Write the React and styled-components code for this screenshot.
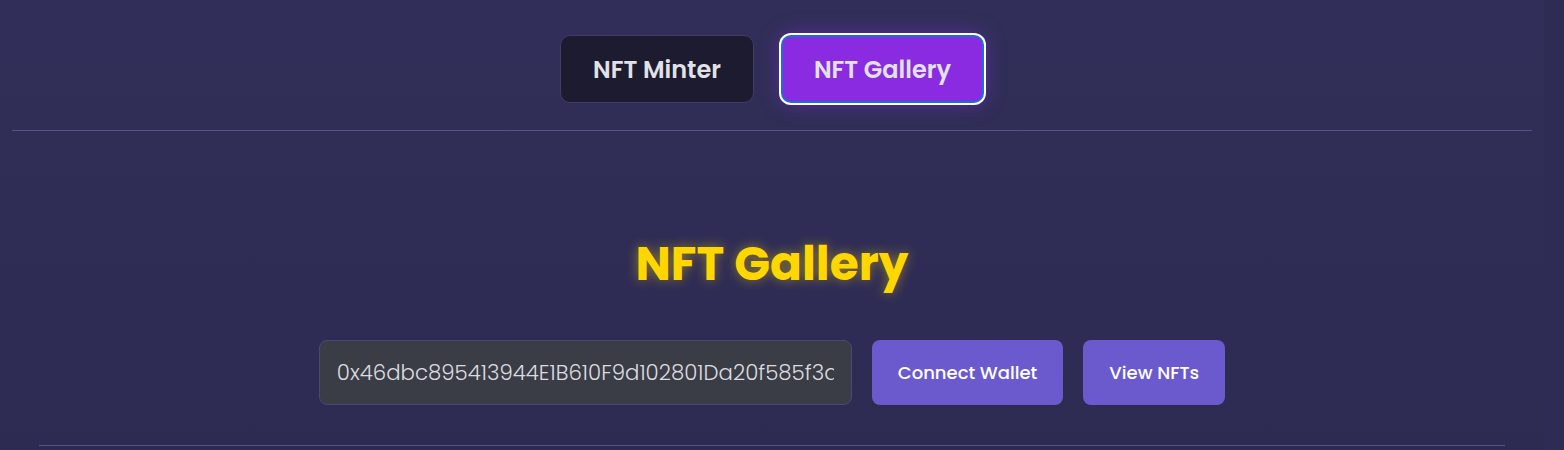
import React, { useState } from 'react'
import styled, { createGlobalStyle } from 'styled-components'

const GlobalStyle = createGlobalStyle`
  html, body {
    margin: 0;
    padding: 0;
    background: #2e2c54;
  }
  body {
    font-family: Poppins, Inter, "Noto Sans", sans-serif;
    color: #e0e0e0;
  }
`

const Page = styled.div`
  width: calc(100% - 20px);
  min-height: 450px;
  background: linear-gradient(180deg, #312f59 0%, #2d2b52 100%);
`

const Nav = styled.nav`
  display: flex;
  justify-content: center;
  gap: 27px;
  margin: 0 12px;
  padding: 35px 0 27px;
  border-bottom: 1px solid #55538a;
`

const TabButton = styled.button`
  height: 68px;
  padding: 0 ${p => (p.$active ? '31px' : '32px')};
  border-radius: 10px;
  font-family: inherit;
  font-size: 24px;
  font-weight: 600;
  color: #e2e2e6;
  cursor: pointer;
  background: ${p => (p.$active ? '#8a2be2' : '#1c1b30')};
  border: ${p => (p.$active ? '2px solid #1a6fd8' : '1px solid #3f3d63')};
  box-shadow: ${p => (p.$active ? '0 0 0 2px #ffffff, 0 0 20px rgba(138, 43, 226, 0.55)' : 'none')};
`

const Section = styled.section`
  display: flex;
  flex-direction: column;
  align-items: center;
  margin: 0 39px;
  padding-top: 100px;
  padding-bottom: 40px;
  border-bottom: 1px solid #55538a;
`

const Title = styled.h1`
  margin: 0 0 43px;
  font-size: 47px;
  line-height: 66px;
  font-weight: 700;
  color: #ffd700;
  text-shadow: 0 0 12px rgba(255, 215, 0, 0.45);
`

const Controls = styled.div`
  display: flex;
  gap: 20px;
  align-items: stretch;
`

const AddressInput = styled.input`
  box-sizing: border-box;
  width: 533px;
  height: 65px;
  padding: 0 17px;
  border: 1px solid #4a4874;
  border-radius: 8px;
  background: #3a3d45;
  color: #dcdce0;
  font-family: inherit;
  font-size: 21.3px;
  font-weight: 300;
  outline: none;
`

const ActionButton = styled.button`
  height: 65px;
  padding: 0 26px;
  border: none;
  border-radius: 8px;
  background: #6a5acd;
  color: #ffffff;
  font-family: inherit;
  font-size: 18px;
  font-weight: 500;
  cursor: pointer;
`

export default function App() {
  const [tab, setTab] = useState('gallery')
  const [address, setAddress] = useState('0x46dbc895413944E1B610F9d102801Da20f585f3a')

  return <>
    <GlobalStyle />
    <Page>
      <Nav>
        <TabButton $active={tab === 'minter'} onClick={() => setTab('minter')}>NFT Minter</TabButton>
        <TabButton $active={tab === 'gallery'} onClick={() => setTab('gallery')}>NFT Gallery</TabButton>
      </Nav>
      <Section>
        <Title>NFT Gallery</Title>
        <Controls>
          <AddressInput value={address} onChange={e => setAddress(e.target.value)} />
          <ActionButton>Connect Wallet</ActionButton>
          <ActionButton>View NFTs</ActionButton>
        </Controls>
      </Section>
    </Page>
  </>
}
